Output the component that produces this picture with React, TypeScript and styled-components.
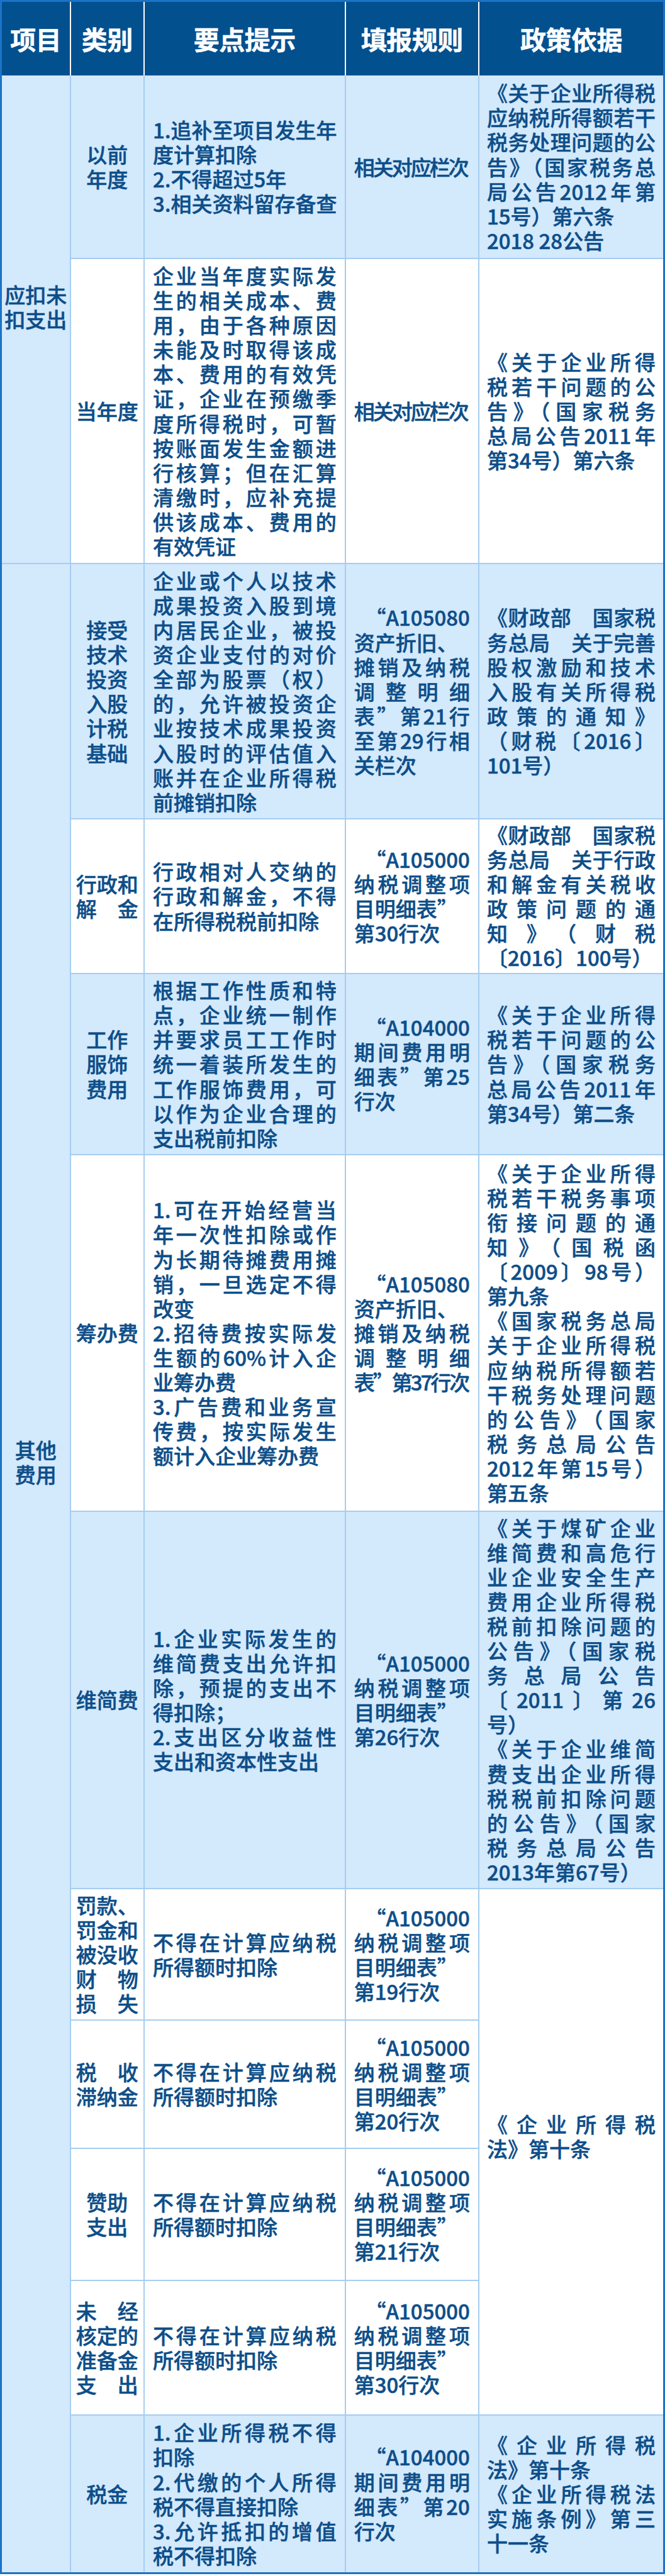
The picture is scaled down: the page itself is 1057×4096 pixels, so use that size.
import React from 'react'
import styled, { createGlobalStyle } from 'styled-components'

type Align = 'justify' | 'left' | 'right' | 'center'

type RowData = {
  bg: string
  kind: string[]
  points: string[]
  rule: string[]
  policy?: string[]
  policySpan?: number
}

const BLUE = '#d3e9fc'
const WHITE = '#ffffff'
const LINE = '#a6cdf0'
const INK = '#0d4e89'

const GlobalStyle = createGlobalStyle`
  html, body {
    margin: 0;
    padding: 0;
    background: #ffffff;
  }
  body {
    font-family: "Noto Sans CJK SC", "Noto Sans", sans-serif;
  }
`

const Table = styled.div`
  width: 1057px;
  box-sizing: border-box;
  border: 3px solid #1b73c7;
  display: grid;
  grid-template-columns: 109.5px 117.4px 319.8px 212.2px 1fr;
  grid-template-rows:
    117.4px 291.4px 485.6px 405.9px 245.5px 288.5px 566.3px
    600.5px 209.3px 203.4px 210.3px 214.2px 248.9px;
  color: ${INK};
  font-size: 33px;
  font-weight: 500;
  line-height: 39.1px;
  -webkit-text-stroke: 0.5px ${INK};
`

const HeadCell = styled.div<{ $last?: boolean }>`
  background: #03508f;
  color: #ffffff;
  -webkit-text-stroke: 0.5px #ffffff;
  font-weight: 700;
  font-size: 41px;
  letter-spacing: -0.5px;
  display: flex;
  align-items: center;
  justify-content: center;
  border-right: ${(p) => (p.$last ? 'none' : '2px solid #ffffff')};
`

const Cell = styled.div<{
  $bg: string
  $span?: number
  $pad: number
  $lift?: number
  $edge?: boolean
  $end?: boolean
}>`
  grid-row: ${(p) => (p.$span ? `span ${p.$span}` : 'auto')};
  box-sizing: border-box;
  min-width: 0;
  background: ${(p) => p.$bg};
  border-right: ${(p) => (p.$edge ? 'none' : `2px solid ${LINE}`)};
  border-bottom: ${(p) => (p.$end ? 'none' : `2px solid ${LINE}`)};
  padding: 0 ${(p) => p.$pad}px ${(p) => p.$lift ?? 0}px;
  display: flex;
  flex-direction: column;
  justify-content: center;
`

const Line = styled.div<{ $align: Align; $tight?: boolean }>`
  white-space: nowrap;
  text-align: ${(p) => (p.$align === 'justify' ? 'justify' : p.$align)};
  text-align-last: ${(p) => (p.$align === 'justify' ? 'justify' : p.$align)};
  letter-spacing: ${(p) => (p.$tight ? '-3px' : '0')};
`

const Text = ({ paras, center }: { paras: string[]; center?: boolean }) => (
  <>
    {paras.map((para, pi) => {
      const lines = para.split('/')
      return lines.map((raw, i) => {
        let align: Align = center ? 'center' : i < lines.length - 1 ? 'justify' : 'left'
        let tight = false
        let text = raw
        if (text.startsWith('>')) {
          align = 'right'
          text = text.slice(1)
        } else if (text.startsWith('<')) {
          align = 'left'
          text = text.slice(1)
        } else if (text.startsWith('~')) {
          align = 'left'
          tight = true
          text = text.slice(1)
        }
        return (
          <Line key={`${pi}-${i}`} $align={align} $tight={tight}>
            {text}
          </Line>
        )
      })
    })}
  </>
)

const notDeductible = ['不得在计算应纳税/所得额时扣除']

const rows: RowData[] = [
  {
    bg: BLUE,
    kind: ['以前/年度'],
    points: ['1.追补至项目发生年/度计算扣除', '2.不得超过5年', '3.相关资料留存备查'],
    rule: ['~相关对应栏次'],
    policy: [
      '《关于企业所得税/应纳税所得额若干/税务处理问题的公/告》（国家税务总/局公告2012年第/15号）第六条',
      '2018 28公告',
    ],
  },
  {
    bg: WHITE,
    kind: ['当年度'],
    points: [
      '企业当年度实际发/生的相关成本、费/用，由于各种原因/未能及时取得该成/本、费用的有效凭/证，企业在预缴季/度所得税时，可暂/按账面发生金额进/行核算；但在汇算/清缴时，应补充提/供该成本、费用的/有效凭证',
    ],
    rule: ['~相关对应栏次'],
    policy: ['《关于企业所得/税若干问题的公/告》（国家税务/总局公告2011年/第34号）第六条'],
  },
  {
    bg: BLUE,
    kind: ['接受/技术/投资/入股/计税/基础'],
    points: [
      '企业或个人以技术/成果投资入股到境/内居民企业，被投/资企业支付的对价/全部为股票（权）/的，允许被投资企/业按技术成果投资/入股时的评估值入/账并在企业所得税/前摊销扣除',
    ],
    rule: ['>“A105080/<资产折旧、/摊销及纳税/调整明细/表”第21行/至第29行相/关栏次'],
    policy: ['《财政部　国家税/务总局　关于完善/股权激励和技术/入股有关所得税/政策的通知》/（财税〔2016〕/101号）'],
  },
  {
    bg: WHITE,
    kind: ['行政和/解　金'],
    points: ['行政相对人交纳的/行政和解金，不得/在所得税税前扣除'],
    rule: ['>“A105000/纳税调整项/<目明细表”/第30行次'],
    policy: ['《财政部　国家税/务总局　关于行政/和解金有关税收/政策问题的通/知》（财税/〔2016〕100号）'],
  },
  {
    bg: BLUE,
    kind: ['工作/服饰/费用'],
    points: [
      '根据工作性质和特/点，企业统一制作/并要求员工工作时/统一着装所发生的/工作服饰费用，可/以作为企业合理的/支出税前扣除',
    ],
    rule: ['>“A104000/期间费用明/细表”第25/行次'],
    policy: ['《关于企业所得/税若干问题的公/告》（国家税务/总局公告2011年/第34号）第二条'],
  },
  {
    bg: WHITE,
    kind: ['筹办费'],
    points: [
      '1.可在开始经营当/年一次性扣除或作/为长期待摊费用摊/销，一旦选定不得/改变',
      '2.招待费按实际发/生额的60%计入企/业筹办费',
      '3.广告费和业务宣/传费，按实际发生/额计入企业筹办费',
    ],
    rule: ['>“A105080/<资产折旧、/摊销及纳税/调整明细/~表”第37行次'],
    policy: [
      '《关于企业所得/税若干税务事项/衔接问题的通/知》（国税函/〔2009〕98号）/第九条',
      '《国家税务总局/关于企业所得税/应纳税所得额若/干税务处理问题/的公告》（国家/税务总局公告/2012年第15号）/第五条',
    ],
  },
  {
    bg: BLUE,
    kind: ['维简费'],
    points: ['1.企业实际发生的/维简费支出允许扣/除，预提的支出不/得扣除；', '2.支出区分收益性/支出和资本性支出'],
    rule: ['>“A105000/纳税调整项/<目明细表”/第26行次'],
    policy: [
      '《关于煤矿企业/维简费和高危行/业企业安全生产/费用企业所得税/税前扣除问题的/公告》（国家税/务总局公告/〔2011〕第26/号）',
      '《关于企业维简/费支出企业所得/税税前扣除问题/的公告》（国家/税务总局公告/2013年第67号）',
    ],
  },
  {
    bg: WHITE,
    kind: ['罚款、/罚金和/被没收/财　物/损　失'],
    points: notDeductible,
    rule: ['>“A105000/纳税调整项/<目明细表”/第19行次'],
    policy: ['《企业所得税/法》第十条'],
    policySpan: 4,
  },
  {
    bg: WHITE,
    kind: ['税　收/滞纳金'],
    points: notDeductible,
    rule: ['>“A105000/纳税调整项/<目明细表”/第20行次'],
  },
  {
    bg: WHITE,
    kind: ['赞助/支出'],
    points: notDeductible,
    rule: ['>“A105000/纳税调整项/<目明细表”/第21行次'],
  },
  {
    bg: WHITE,
    kind: ['未　经/核定的/准备金/支　出'],
    points: notDeductible,
    rule: ['>“A105000/纳税调整项/<目明细表”/第30行次'],
  },
  {
    bg: BLUE,
    kind: ['税金'],
    points: ['1.企业所得税不得/扣除', '2.代缴的个人所得/税不得直接扣除', '3.允许抵扣的增值/税不得扣除'],
    rule: ['>“A104000/期间费用明/细表”第20/行次'],
    policy: ['《企业所得税/法》第十条', '《企业所得税法/实施条例》第三/十一条'],
  },
]

const groups: Record<number, { label: string; span: number; lift: number }> = {
  0: { label: '应扣未/扣支出', span: 2, lift: 39 },
  2: { label: '其他/费用', span: 10, lift: 338 },
}

const headers = ['项目', '类别', '要点提示', '填报规则', '政策依据']

export default function App() {
  return (
    <>
      <GlobalStyle />
      <Table>
        {headers.map((h, i) => (
          <HeadCell key={h} $last={i === headers.length - 1}>
            {h}
          </HeadCell>
        ))}
        {rows.map((row, r) => {
          const end = r === rows.length - 1
          const group = groups[r]
          return (
            <React.Fragment key={r}>
              {group && (
                <Cell $bg={BLUE} $span={group.span} $pad={3} $lift={group.lift} $end={r + group.span === rows.length}>
                  <Text paras={[group.label]} center />
                </Cell>
              )}
              <Cell $bg={row.bg} $pad={8} $end={end}>
                <Text paras={row.kind} center />
              </Cell>
              <Cell $bg={row.bg} $pad={13} $end={end}>
                <Text paras={row.points} />
              </Cell>
              <Cell $bg={row.bg} $pad={13} $end={end}>
                <Text paras={row.rule} />
              </Cell>
              {row.policy && (
                <Cell
                  $bg={row.bg}
                  $pad={12}
                  $edge
                  $end={end}
                  $span={row.policySpan}
                  $lift={row.policySpan ? 49 : 0}
                >
                  <Text paras={row.policy} />
                </Cell>
              )}
            </React.Fragment>
          )
        })}
      </Table>
    </>
  )
}
